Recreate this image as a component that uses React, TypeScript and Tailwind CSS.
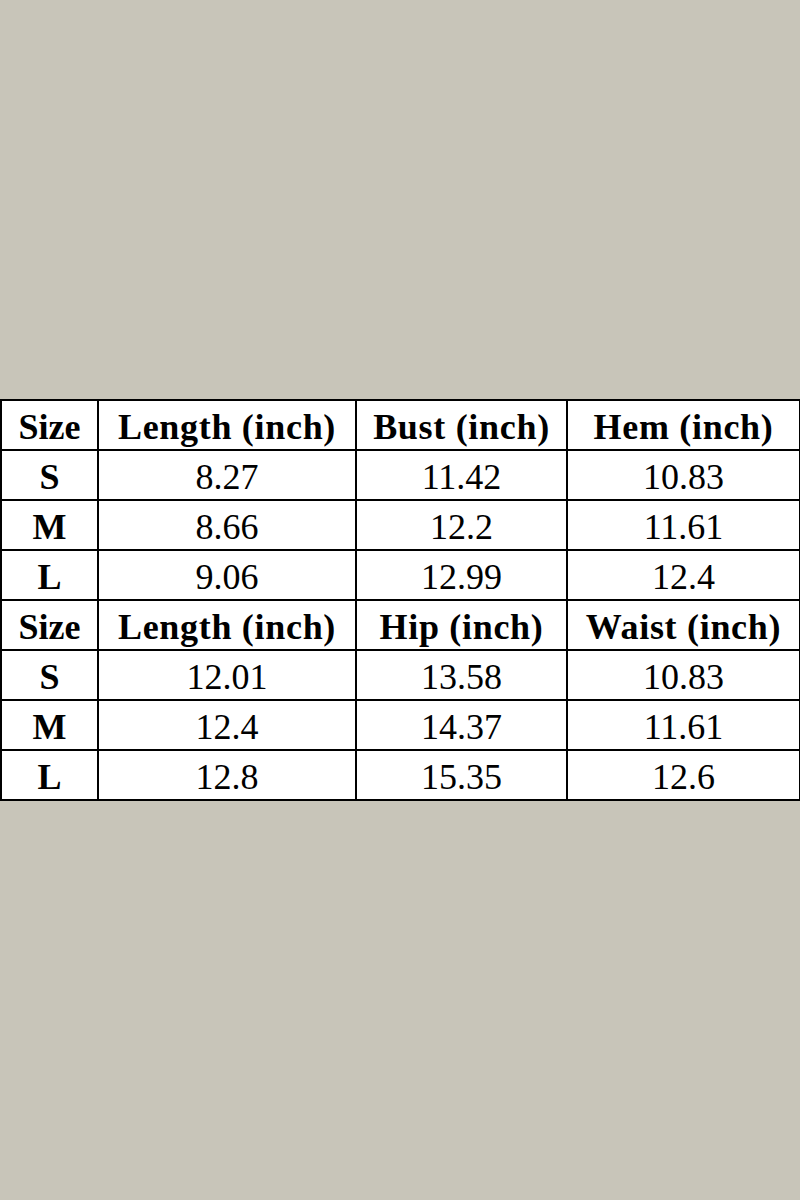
import React from 'react';

type Block = { head: string[]; rows: string[][] };

const blocks: Block[] = [
  {
    head: ['Size', 'Length (inch)', 'Bust (inch)', 'Hem (inch)'],
    rows: [
      ['S', '8.27', '11.42', '10.83'],
      ['M', '8.66', '12.2', '11.61'],
      ['L', '9.06', '12.99', '12.4'],
    ],
  },
  {
    head: ['Size', 'Length (inch)', 'Hip (inch)', 'Waist (inch)'],
    rows: [
      ['S', '12.01', '13.58', '10.83'],
      ['M', '12.4', '14.37', '11.61'],
      ['L', '12.8', '15.35', '12.6'],
    ],
  },
];

const App: React.FC = () => {
  return (
    <div className="w-[800px] h-[1200px] bg-[#c8c5b9] pt-[399px] font-['Liberation_Serif',serif] text-black">
      <table className="w-[799px] border-collapse border-2 border-black bg-white table-fixed">
        <colgroup>
          <col className="w-[97px]" />
          <col className="w-[258px]" />
          <col className="w-[211px]" />
          <col className="w-[233px]" />
        </colgroup>
        <tbody>
          {blocks.map((b, bi) => (
            <React.Fragment key={bi}>
              <tr className="h-[50px]">
                {b.head.map((h, i) => (
                  <td
                    key={i}
                    className={`border-2 border-black text-center font-bold text-[36px] leading-none p-0 pt-[4px] ${i === 0 ? '' : 'tracking-[0.7px]'}`}
                  >
                    {h}
                  </td>
                ))}
              </tr>
              {b.rows.map((r, ri) => (
                <tr key={ri} className="h-[50px]">
                  {r.map((c, ci) => (
                    <td
                      key={ci}
                      className={`border-2 border-black text-center text-[36px] leading-none p-0 pt-[4px] ${ci === 0 ? 'font-bold' : ''}`}
                    >
                      {c}
                    </td>
                  ))}
                </tr>
              ))}
            </React.Fragment>
          ))}
        </tbody>
      </table>
    </div>
  );
};

export default App;
